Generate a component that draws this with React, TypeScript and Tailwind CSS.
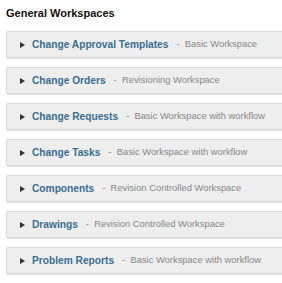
const workspaces = [
    { nome: 'Change Approval Templates', tipo: 'Basic Workspace' },
    { nome: 'Change Orders', tipo: 'Revisioning Workspace' },
    { nome: 'Change Requests', tipo: 'Basic Workspace with workflow' },
    { nome: 'Change Tasks', tipo: 'Basic Workspace with workflow' },
    { nome: 'Components', tipo: 'Revision Controlled Workspace' },
    { nome: 'Drawings', tipo: 'Revision Controlled Workspace' },
    { nome: 'Problem Reports', tipo: 'Basic Workspace with workflow' },
];

function App() {
    return (
        <div className="bg-white w-[282px] h-[283px] overflow-hidden font-['Liberation_Sans',Arial,sans-serif]">
            <h1 className="pl-[6px] pt-[6px] text-[11px] leading-[14px] font-bold text-[#111]">
                General Workspaces
            </h1>
            <div className="flex flex-col gap-[9px] pl-[6px] mt-[11px] w-[300px]">
                {workspaces.map((w) => (
                    <div
                        key={w.nome}
                        className="h-[27px] flex items-center bg-[#eeeeee] border border-[#d9d9d9] rounded-[2px] shadow-[0_1px_1px_rgba(0,0,0,0.12)]"
                    >
                        <span className="ml-[13px] w-0 h-0 border-y-[3.5px] border-y-transparent border-l-[5px] border-l-[#333]"></span>
                        <span className="ml-[7px] text-[10.2px] font-bold text-[#3a6d92]">{w.nome}</span>
                        <span className="ml-[8px] text-[9.4px] text-[#888]">-&nbsp; {w.tipo}</span>
                    </div>
                ))}
            </div>
        </div>
    );
}

export default App;
